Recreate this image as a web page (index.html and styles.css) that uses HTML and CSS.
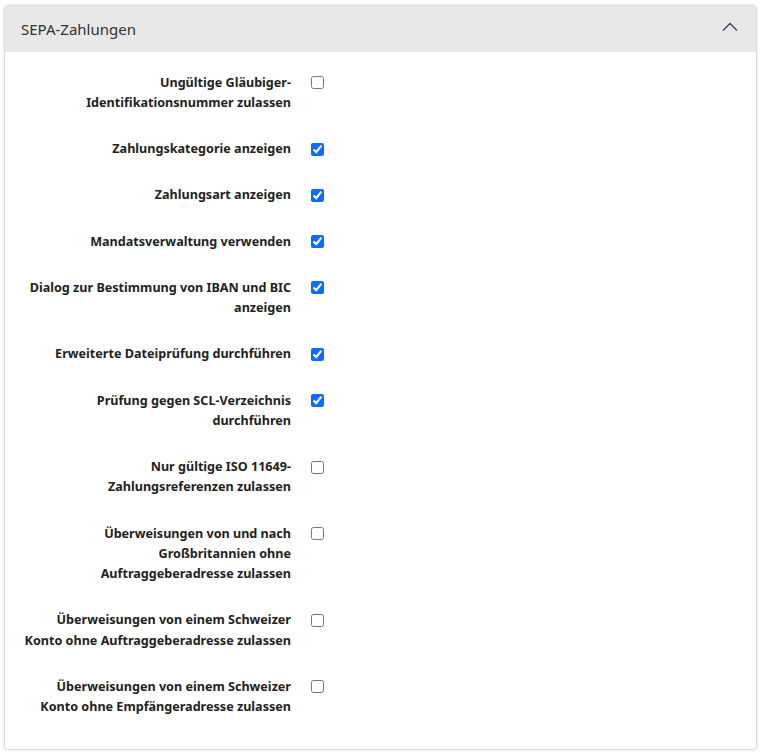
FILE: index.html
```html
<!DOCTYPE html>
<html lang="de">
<head>
<meta charset="UTF-8" />
<title>SEPA-Zahlungen</title>
<link rel="stylesheet" href="styles.css">
</head>
<body>
<div class="card">
  <!-- Header -->
  <div class="card-header">
    <span class="card-title">SEPA-Zahlungen</span>
    <svg class="chevron" width="16" height="10" viewBox="0 0 16 10">
      <polyline points="1,8.5 8,1.5 15,8.5" fill="none" stroke="#2d3f5e" stroke-width="1.3" />
    </svg>
  </div>

  <!-- Options -->
  <div class="card-body">
    <div class="form-row">
      <label class="form-label" for="opt1">Ungültige Gläubiger-<br>Identifikationsnummer zulassen</label>
      <div class="form-check"><input type="checkbox" id="opt1" /></div>
    </div>
    <div class="form-row">
      <label class="form-label" for="opt2">Zahlungskategorie anzeigen</label>
      <div class="form-check"><input type="checkbox" id="opt2" checked /></div>
    </div>
    <div class="form-row">
      <label class="form-label" for="opt3">Zahlungsart anzeigen</label>
      <div class="form-check"><input type="checkbox" id="opt3" checked /></div>
    </div>
    <div class="form-row">
      <label class="form-label" for="opt4">Mandatsverwaltung verwenden</label>
      <div class="form-check"><input type="checkbox" id="opt4" checked /></div>
    </div>
    <div class="form-row">
      <label class="form-label" for="opt5">Dialog zur Bestimmung von IBAN und BIC<br>anzeigen</label>
      <div class="form-check"><input type="checkbox" id="opt5" checked /></div>
    </div>
    <div class="form-row">
      <label class="form-label" for="opt6">Erweiterte Dateiprüfung durchführen</label>
      <div class="form-check"><input type="checkbox" id="opt6" checked /></div>
    </div>
    <div class="form-row">
      <label class="form-label" for="opt7">Prüfung gegen SCL-Verzeichnis<br>durchführen</label>
      <div class="form-check"><input type="checkbox" id="opt7" checked /></div>
    </div>
    <div class="form-row">
      <label class="form-label" for="opt8">Nur gültige ISO 11649-<br>Zahlungsreferenzen zulassen</label>
      <div class="form-check"><input type="checkbox" id="opt8" /></div>
    </div>
    <div class="form-row">
      <label class="form-label" for="opt9">Überweisungen von und nach<br>Großbritannien ohne<br>Auftraggeberadresse zulassen</label>
      <div class="form-check"><input type="checkbox" id="opt9" /></div>
    </div>
    <div class="form-row">
      <label class="form-label" for="opt10">Überweisungen von einem Schweizer<br>Konto ohne Auftraggeberadresse zulassen</label>
      <div class="form-check"><input type="checkbox" id="opt10" /></div>
    </div>
    <div class="form-row">
      <label class="form-label" for="opt11">Überweisungen von einem Schweizer<br>Konto ohne Empfängeradresse zulassen</label>
      <div class="form-check"><input type="checkbox" id="opt11" /></div>
    </div>
  </div>
</div>
</body>
</html>
```

FILE: styles.css
```css
body {
  margin: 0;
  padding: 5px 5px 4px 4px;
  font-family: 'Noto Sans', 'Open Sans', sans-serif;
  color: #212529;
  background: #fff;
}
.card {
  border: 1px solid #dcdcdc;
  border-radius: 4px;
  background: #fff;
  box-shadow: 0 0 3px rgba(0,0,0,0.12);
  overflow: hidden;
}
/* Header */
.card-header {
  display: flex;
  align-items: center;
  justify-content: space-between;
  height: 46px;
  padding: 0 18px 0 16px;
  background: #e8e8e8;
}
.card-title {
  font-size: 15px;
  color: #333;
}
.chevron {
  display: block;
  margin-top: -4px;
}
/* Body */
.card-body {
  display: flex;
  flex-direction: column;
  gap: 26px;
  padding: 20.5px 16px 32px 15px;
}
.form-row {
  display: grid;
  grid-template-columns: 271px 1fr;
  column-gap: 20px;
}
.form-label {
  font-size: 12.6px;
  font-weight: bold;
  line-height: 20.25px;
  text-align: right;
  white-space: nowrap;
  color: #222;
}
.form-check input {
  display: block;
  width: 13px;
  height: 13px;
  margin: 3.5px 0 0 0;
  accent-color: #0b6cff;
}
```
